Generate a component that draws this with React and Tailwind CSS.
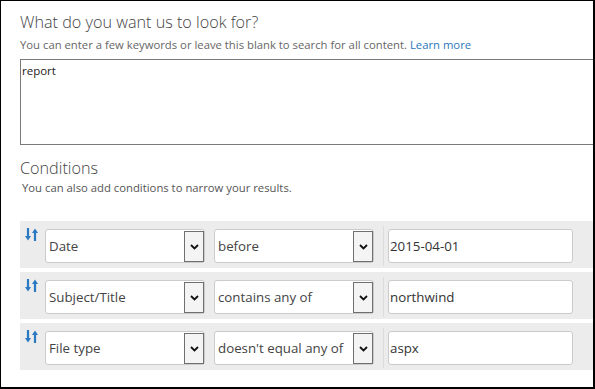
import React from 'react';

const font = { fontFamily: '"Open Sans", "Noto Sans", Arial, sans-serif' };

function SortIcon() {
  return (
    <svg width="13" height="13" viewBox="0 0 13 13" className="shrink-0">
      <path d="M3 0v10" stroke="#2b79c2" strokeWidth="2.2" />
      <path d="M0 8l3 4.5 3-4.5z" fill="#2b79c2" />
      <path d="M10 13V3" stroke="#2b79c2" strokeWidth="2.2" />
      <path d="M7 5l3-4.5 3 4.5z" fill="#2b79c2" />
    </svg>
  );
}

function Select({ value, width }) {
  return (
    <div className={`relative h-[34px] ${width} shrink-0 bg-white border border-[#cbcbcb] rounded-[3px] flex items-center`}>
      <span className="pl-[3px] pt-[1px] text-[13.3px] text-[#444] whitespace-nowrap">{value}</span>
      <div className="absolute right-0 top-[1px] w-[20px] h-[31px] border border-[#6f6f6f] bg-[#f4f4f4] flex items-center justify-center">
        <svg width="9" height="6" viewBox="0 0 9 6">
          <path d="M1 1l3.5 3.5L8 1" fill="none" stroke="#111" strokeWidth="1.8" />
        </svg>
      </div>
    </div>
  );
}

function Row({ field, op, value, edge }) {
  return (
    <div className="h-[47px] w-[600px] bg-[#ececec] flex items-start pl-[5px] pt-[7px]">
      <SortIcon />
      <div className="ml-[7px] mt-[1px] flex items-start">
        <Select value={field} width="w-[160px]" />
        <div className="w-[9px]" />
        <Select value={op} width="w-[160px]" />
        <div className="ml-[9px] mr-[4px] w-px h-[40px] -mt-[3px] bg-[#dcdcdc]" />
        <div className="h-[34px] w-[185px] bg-white border border-[#cbcbcb] rounded-[3px] flex items-center pl-[1px] pt-[1px] text-[13.3px] text-[#333]">
          {value}
        </div>
        {edge && <div className="ml-[20px] h-[34px] w-[10px] border border-[#cbcbcb] rounded-[3px] bg-white" />}
      </div>
    </div>
  );
}

export default function App() {
  return (
    <div style={font} className="w-[595px] h-[389px] overflow-hidden bg-white border-l border-t border-r-2 border-b-2 border-black pl-[19px] pt-[9px]">
      <h2 className="text-[16.2px] leading-[24px] font-light text-[#444]">What do you want us to look for?</h2>
      <p className="mt-[3px] text-[11.3px] leading-[16px] text-[#666] whitespace-nowrap">
        You can enter a few keywords or leave this blank to search for all content.{' '}
        <span className="text-[#2a78bd]">Learn more</span>
      </p>
      <div className="mt-[6px] h-[86px] w-[600px] border border-[#7a7a7a] pt-[3px] pl-[1px] text-[11.5px] leading-[16px] text-[#222]">
        report
      </div>
      <h2 className="mt-[11px] text-[16.2px] leading-[24px] font-light text-[#444]">Conditions</h2>
      <p className="pl-[2px] text-[11.3px] leading-[16px] text-[#555]">You can also add conditions to narrow your results.</p>
      <div className="mt-[25px] flex flex-col gap-[4px]">
        <Row field="Date" op="before" value="2015-04-01" />
        <Row field="Subject/Title" op="contains any of" value="northwind" edge />
        <Row field="File type" op="doesn't equal any of" value="aspx" edge />
      </div>
    </div>
  );
}
